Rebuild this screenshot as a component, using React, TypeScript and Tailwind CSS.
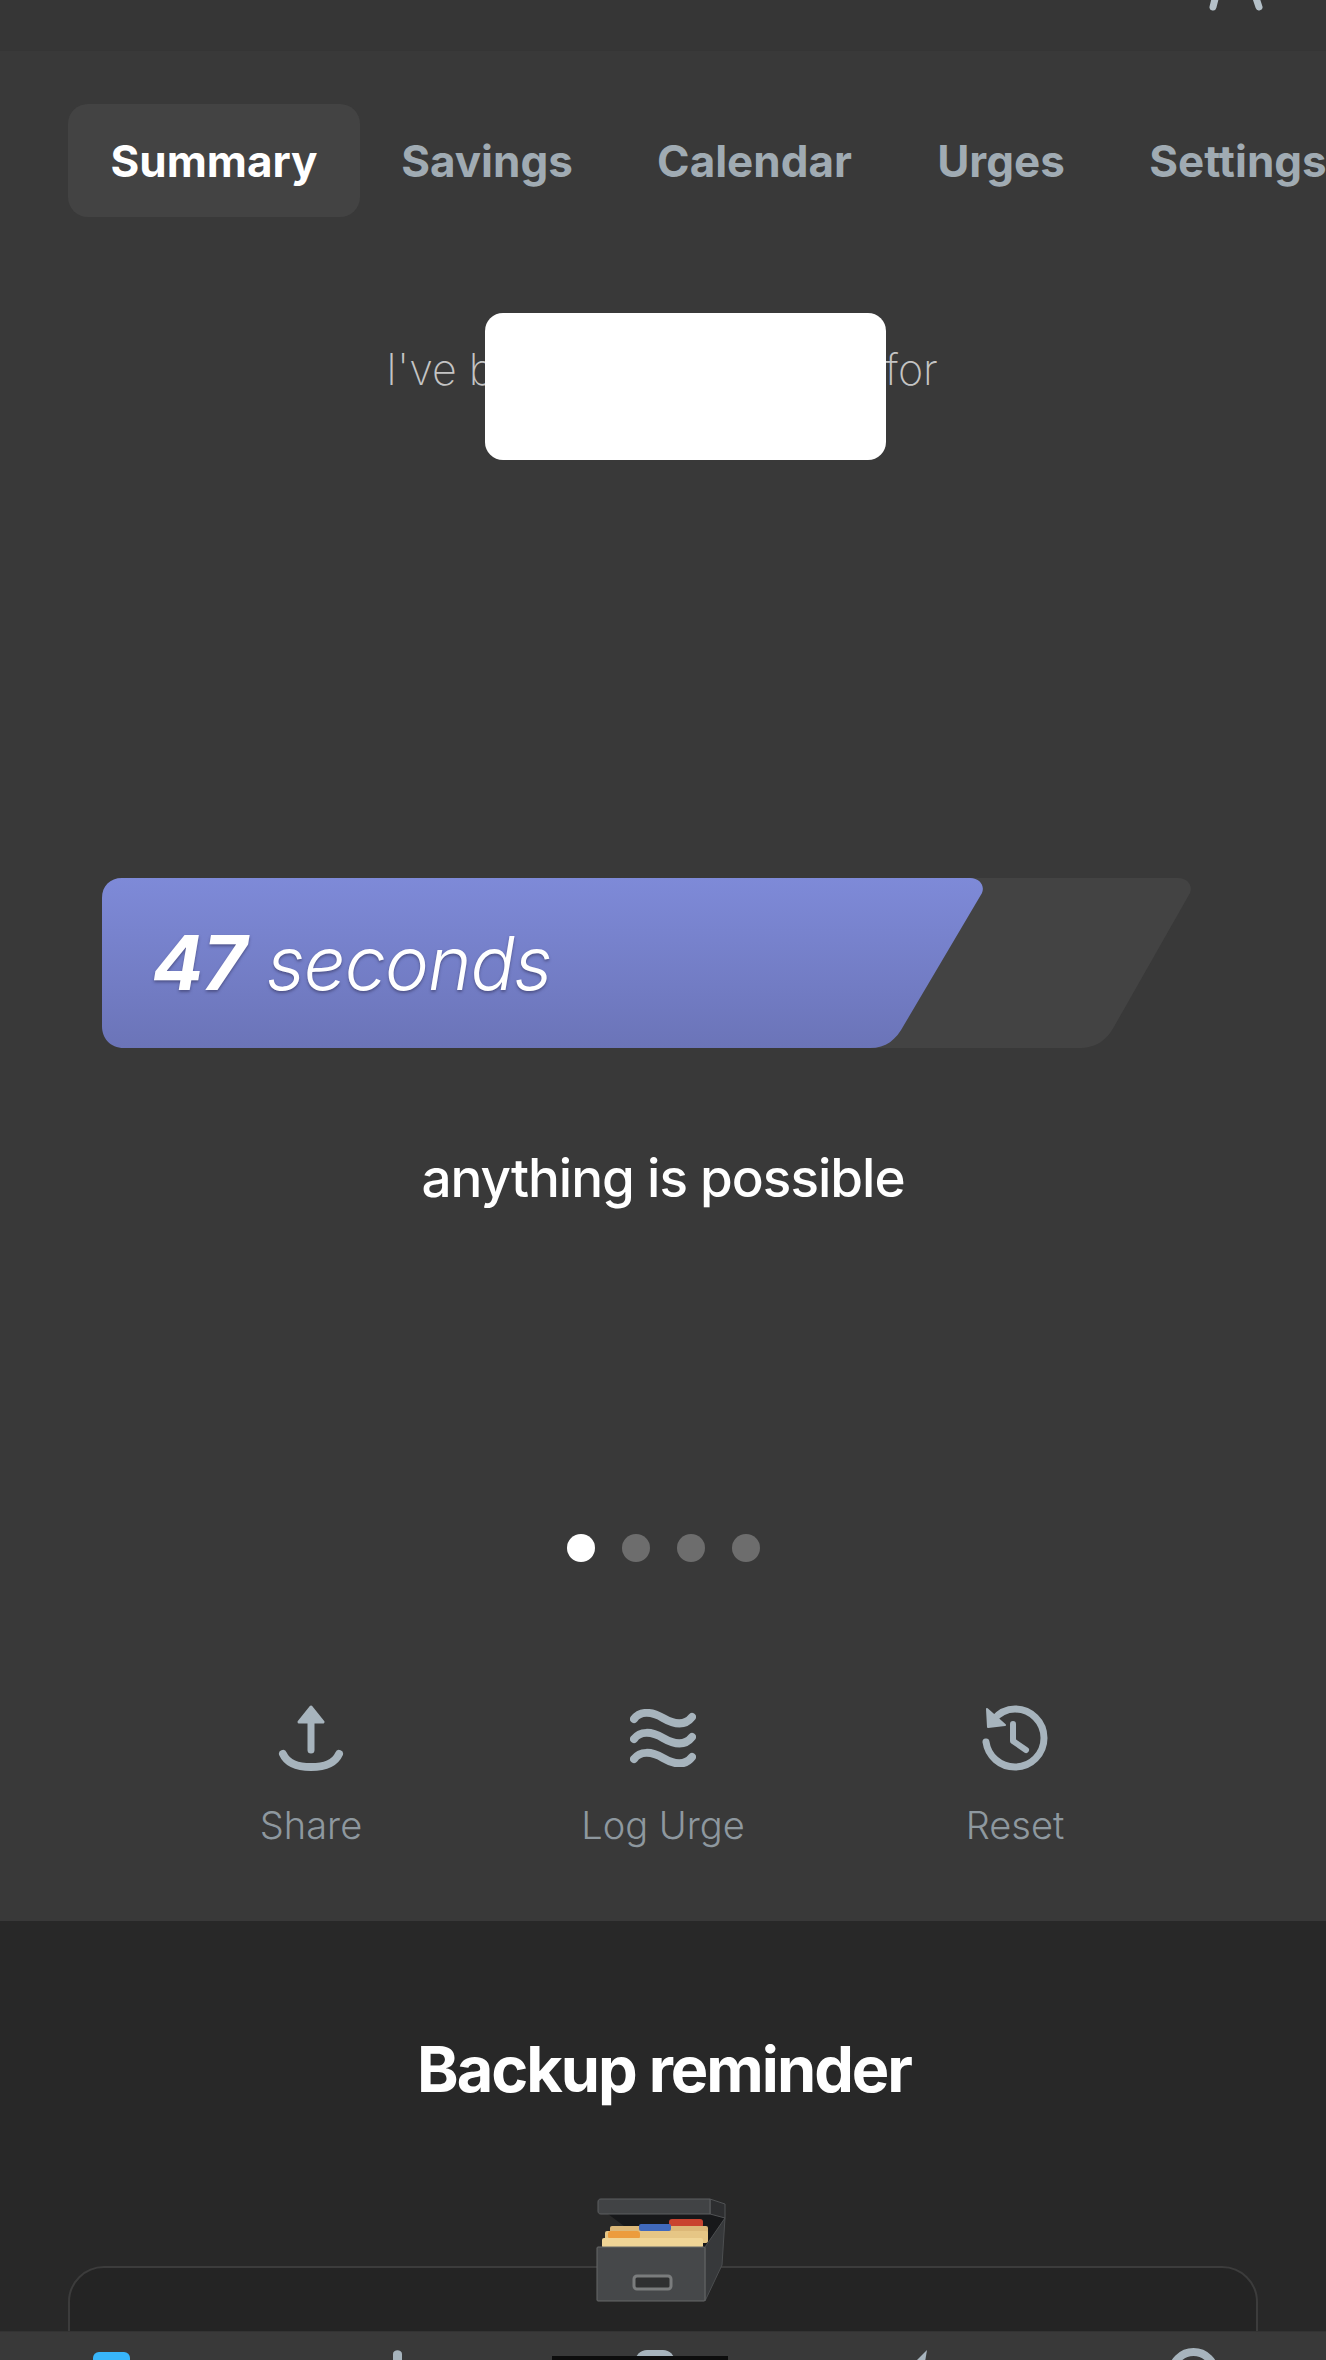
const font = "font-['Inter','Noto_Sans',sans-serif]"

const tabs = [
  { label: 'Summary', className: 'w-[292px] rounded-[20px] bg-[#434343] text-white' },
  { label: 'Savings', className: 'w-[170px] ml-[42px] text-[#a0abb3]' },
  { label: 'Calendar', className: 'w-[197px] ml-[84px] text-[#a0abb3]' },
  { label: 'Urges', className: 'w-[128px] ml-[84px] text-[#a0abb3]' },
  { label: 'Settings', className: 'w-[176px] ml-[85px] text-[#a0abb3]' },
]

function ShareIcon() {
  return (
    <svg width="66" height="66" viewBox="0 0 66 66" fill="none" stroke="#a7b4bd" strokeLinecap="round">
      <path d="M33 10v35" strokeWidth="7" />
      <path d="M33 2l12 15H21z" fill="#a7b4bd" stroke="#a7b4bd" strokeWidth="3" strokeLinejoin="round" />
      <path d="M5 49c4 9 15 13 28 13s24-4 28-13" strokeWidth="8" />
    </svg>
  )
}

function WavesIcon() {
  return (
    <svg width="66" height="58" viewBox="0 0 66 58" fill="none" stroke="#a7b4bd" strokeWidth="8" strokeLinecap="round">
      <path d="M4 10C10 2 21 2 33 9s22 8 29-1" />
      <path d="M4 30C10 22 21 22 33 29s22 8 29-1" />
      <path d="M4 50C10 42 21 42 33 49s22 8 29-1" />
    </svg>
  )
}

function ResetIcon() {
  return (
    <svg width="66" height="66" viewBox="0 0 66 66" fill="none" stroke="#a7b4bd" strokeLinecap="round" strokeLinejoin="round">
      <path d="M11 15C17 8 25 4 33 4c16 0 29 13 29 29S49 62 33 62C18 62 6 51 4 37" strokeWidth="7" />
      <path d="M5 4l1 18 17-2z" fill="#a7b4bd" strokeWidth="2" />
      <path d="M31 19v17l13 9" strokeWidth="6" />
    </svg>
  )
}

function FileBoxIcon() {
  return (
    <svg width="132" height="106" viewBox="0 0 132 106" fill="none">
      {/* dark inside of the box */}
      <path d="M12 16h112l5 4-20 32H14l14-24z" fill="#17181a" />
      {/* folders and tabs */}
      <rect x="73" y="21" width="34" height="9" rx="3" fill="#c9432f" />
      <rect x="14" y="28" width="98" height="14" rx="2" fill="#dcb878" />
      <rect x="43" y="26" width="32" height="7" rx="2" fill="#4069bc" />
      <rect x="9" y="33" width="103" height="12" rx="2" fill="#e6c685" />
      <rect x="12" y="33" width="32" height="8" rx="3" fill="#ec9c3d" />
      <rect x="6" y="40" width="101" height="10" rx="2" fill="#f0d596" />
      {/* lid */}
      <path d="M114 1l15 5v14l-15 -4z" fill="#2d2e30" stroke="#505254" />
      <path d="M2 4c0-2 1-3 3-3h109v15H5c-2 0-3-1-3-3z" fill="#414345" stroke="#5d5f61" />
      {/* body */}
      <path d="M109 49l20-29-3 47-17 36z" fill="#37393b" stroke="#4c4e50" />
      <rect x="1" y="49" width="108" height="54" rx="1" fill="#46484a" stroke="#666869" />
      <rect x="38" y="78" width="37" height="13" rx="3" fill="#2f3031" stroke="#7a7c7d" strokeWidth="3" />
    </svg>
  )
}

function ActionButton({ icon, label, className }: { icon: React.ReactNode; label: string; className: string }) {
  return (
    <div className={`w-[180px] flex flex-col items-center ${className}`}>
      <div className="h-[66px] flex items-center justify-center">{icon}</div>
      <span className="mt-[34px] text-[38px] leading-[40px] font-light text-[#8e989f]">{label}</span>
    </div>
  )
}

export default function App() {
  return (
    <div className={`w-[1326px] h-[2360px] overflow-hidden flex flex-col bg-[#393939] ${font}`}>
      {/* Header */}
      <div className="h-[51px] shrink-0 bg-[#363636] border-b border-[#353535] flex justify-end pr-[62px] overflow-hidden">
        <svg width="56" height="12" viewBox="0 0 56 12" fill="none" stroke="#b4c0c8" strokeWidth="7" strokeLinecap="round" className="-mt-px">
          <path d="M8 -4 5 8M47 -4l4 12" />
        </svg>
      </div>

      {/* Tabs */}
      <nav className="mt-[53px] pl-[68px] flex whitespace-nowrap overflow-hidden">
        {tabs.map((t) => (
          <div key={t.label} className={`h-[113px] shrink-0 flex items-center justify-center text-[44px] font-bold ${t.className}`}>
            {t.label}
          </div>
        ))}
      </nav>

      {/* Headline */}
      <div className="relative mt-[96px] h-[148px]">
        <p className="pt-[28px] pl-[386px] text-[43px] leading-[56px] font-extralight text-[#c4c4c4] flex">
          <span className="w-[499px]">I've been</span>
          <span>for</span>
        </p>
        <div className="absolute left-[485px] top-0 w-[401px] h-[147px] rounded-[18px] bg-white" />
      </div>

      {/* Progress */}
      <div className="relative mt-[417px] ml-[102px] w-[1090px] h-[170px]">
        <svg width="1090" height="170" viewBox="0 0 1090 170" className="absolute inset-0">
          <defs>
            <linearGradient id="bar" x1="0" y1="0" x2="0" y2="1">
              <stop offset="0" stopColor="#7e8ad8" />
              <stop offset="1" stopColor="#6b74b8" />
            </linearGradient>
          </defs>
          <path d="M300 0h776c10 0 15 8 12 15l-75 132c-8 15-18 23-37 23H300z" fill="#434343" />
          <path d="M20 0H868c10 0 15 8 12 15L802 147c-8 15-18 23-34 23H22C8 170 0 160 0 148V20C0 8 8 0 20 0z" fill="url(#bar)" />
        </svg>
        <p className="relative pl-[50px] pt-[44px] text-[74px] leading-[80px] italic text-white [text-shadow:0_2px_3px_rgba(50,50,90,0.55)]">
          <span className="font-bold text-[76px] tracking-[-1px]">47</span> <span className="font-light tracking-[-1px]">seconds</span>
        </p>
      </div>

      <p className="mt-[98px] text-center text-[53px] leading-[64px] font-medium tracking-[-1px] text-white">anything is possible</p>

      {/* Pager */}
      <div className="mt-[324px] flex justify-center gap-[27px]">
        <span className="w-[28px] h-[28px] rounded-full bg-white" />
        <span className="w-[28px] h-[28px] rounded-full bg-[#6d6d6d]" />
        <span className="w-[28px] h-[28px] rounded-full bg-[#6d6d6d]" />
        <span className="w-[28px] h-[28px] rounded-full bg-[#6d6d6d]" />
      </div>

      {/* Actions */}
      <div className="mt-[143px] flex pl-[221px]">
        <ActionButton icon={<ShareIcon />} label="Share" className="" />
        <ActionButton icon={<WavesIcon />} label="Log Urge" className="ml-[172px]" />
        <ActionButton icon={<ResetIcon />} label="Reset" className="ml-[172px]" />
      </div>

      {/* Backup reminder */}
      <section className="relative mt-[76px] flex-1 bg-[#282828]">
        <h2 className="pt-[112px] text-center text-[63px] leading-[72px] font-bold tracking-[-2px] text-white pl-[2px]">Backup reminder</h2>
        <div className="absolute left-[68px] right-[68px] top-[345px] h-[200px] rounded-t-[36px] border-2 border-[#3c3c3c] bg-[#242424]" />
        <div className="absolute left-[596px] top-[277px]">
          <FileBoxIcon />
        </div>
      </section>

      {/* Bottom nav */}
      <div className="relative h-[29px] shrink-0 bg-[#393939] border-t border-[#333333]">
        <div className="absolute left-[93px] top-[20px] w-[37px] h-[12px] rounded-t-[6px] bg-[#38b6fb]" />
        <svg width="60" height="12" viewBox="0 0 60 12" className="absolute left-[368px] top-[18px]" fill="#a7b4bd">
          <path d="M25 4c0-5 9-5 9 0v8h-9zM5 10h4v2H5zM51 10h4v2h-4z" />
        </svg>
        <div className="absolute left-[635px] top-[18px] w-[40px] h-[12px] rounded-t-full bg-[#a7b4bd]" />
        <div className="absolute left-[552px] top-[24px] w-[176px] h-[6px] bg-[#0e0e0e]" />
        <svg width="14" height="12" viewBox="0 0 14 12" className="absolute left-[914px] top-[18px]" fill="#a7b4bd">
          <path d="M13 0 1 12h10z" />
        </svg>
        <div className="absolute left-[1168px] top-[16px] w-[51px] h-[51px] rounded-full border-[8px] border-[#a7b4bd]" />
      </div>
    </div>
  )
}
